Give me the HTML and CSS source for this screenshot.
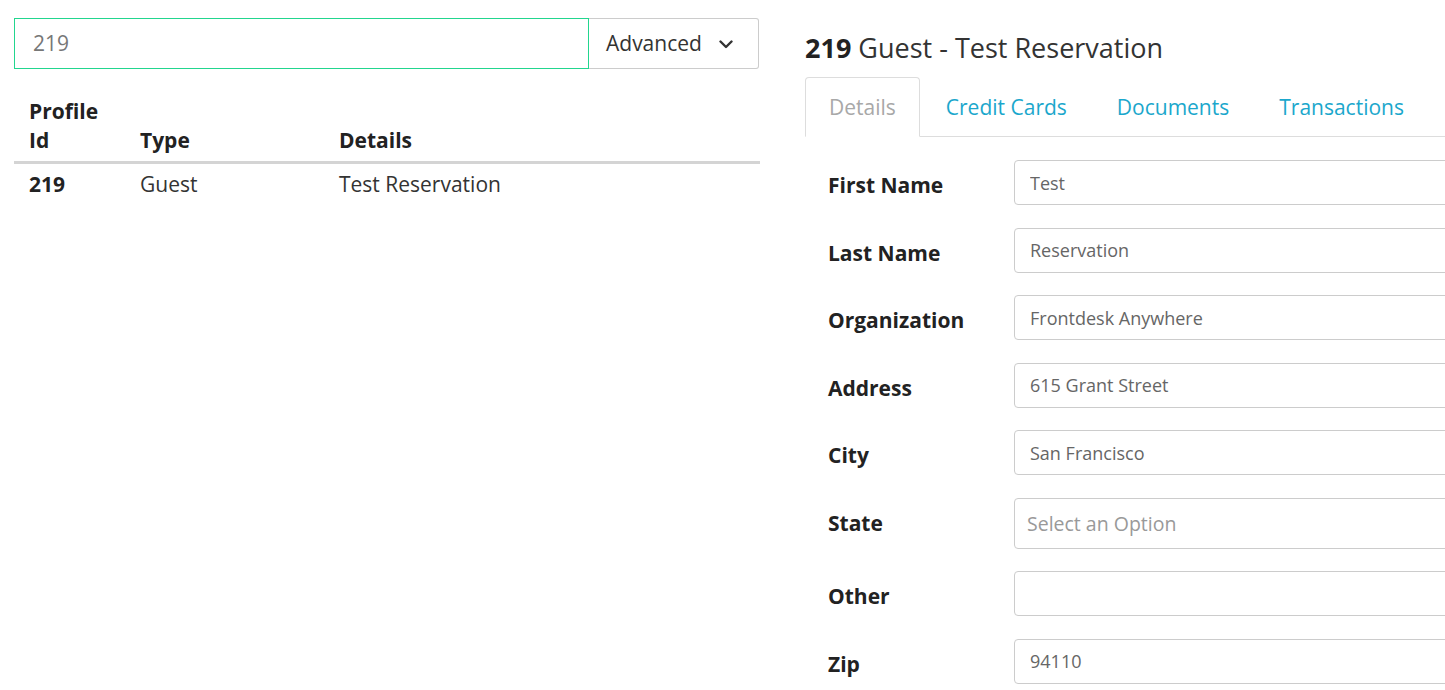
FILE: index.html
```html
<!DOCTYPE html>
<html>
<head>
<meta charset="utf-8">
<link rel="stylesheet" href="styles.css">
</head>
<body>
<div class="page">
  <div class="left">
    <div class="search">
      <input class="search-input" type="text" value="219">
      <button class="adv-btn">Advanced
        <svg class="chev" width="14" height="9" viewBox="0 0 14 9"><path d="M1.5 1.5l5.5 5.5 5.5-5.5" fill="none" stroke="#333" stroke-width="2.4" stroke-linecap="round" stroke-linejoin="round"/></svg>
      </button>
    </div>
    <table class="results">
      <colgroup><col class="c1"><col class="c2"><col class="c3"></colgroup>
      <thead>
        <tr><th>Profile Id</th><th>Type</th><th>Details</th></tr>
      </thead>
      <tbody>
        <tr><td class="bold">219</td><td>Guest</td><td>Test Reservation</td></tr>
      </tbody>
    </table>
  </div>
  <div class="right">
    <h2 class="title"><strong>219</strong> Guest - Test Reservation</h2>
    <ul class="tabs">
      <li class="tab active"><a>Details</a></li>
      <li class="tab"><a>Credit Cards</a></li>
      <li class="tab"><a>Documents</a></li>
      <li class="tab"><a>Transactions</a></li>
    </ul>
    <div class="form">
      <div class="row"><label>First Name</label><input class="field" type="text" value="Test"></div>
      <div class="row"><label>Last Name</label><input class="field" type="text" value="Reservation"></div>
      <div class="row"><label>Organization</label><input class="field" type="text" value="Frontdesk Anywhere"></div>
      <div class="row"><label>Address</label><input class="field" type="text" value="615 Grant Street"></div>
      <div class="row"><label>City</label><input class="field" type="text" value="San Francisco"></div>
      <div class="row"><label>State</label><div class="select">Select an Option</div></div>
      <div class="row"><label>Other</label><input class="field" type="text" value=""></div>
      <div class="row"><label>Zip</label><input class="field" type="text" value="94110"></div>
    </div>
  </div>
</div>
</body>
</html>
```

FILE: styles.css
```css
html, body {
  margin: 0;
  padding: 0;
  background: #fff;
  overflow: hidden;
  width: 1445px;
  height: 690px;
}
body {
  font-family: "Open Sans", "Liberation Sans", sans-serif;
  color: #333;
}
.page {
  display: flex;
  gap: 45px;
  padding: 18px 0 0 14px;
}
.left {
  width: 746px;
  flex: none;
}
.search {
  display: flex;
  height: 51px;
  width: 745px;
}
.search-input {
  box-sizing: border-box;
  width: 575px;
  height: 51px;
  border: 1px solid #22d68f;
  margin: 0;
  padding: 0 18px 2px;
  font-family: inherit;
  font-size: 21px;
  color: #777;
  outline: none;
  background: #fff;
}
.adv-btn {
  box-sizing: border-box;
  flex: 1;
  height: 51px;
  margin: 0;
  border: 1px solid #ccc;
  border-left: none;
  border-radius: 0 3px 3px 0;
  background: #fff;
  font-family: inherit;
  font-size: 21px;
  color: #333;
  display: flex;
  align-items: center;
  padding: 0 0 2px 17px;
  gap: 17px;
}
.chev {
  display: block;
  margin-top: 3px;
}
.results {
  margin-top: 20px;
  width: 746px;
  border-collapse: collapse;
  table-layout: fixed;
  font-size: 21px;
  line-height: 29px;
}
.c1 { width: 111px; }
.c2 { width: 199px; }
.results th {
  text-align: left;
  font-weight: 700;
  vertical-align: bottom;
  padding: 8px 15px 6px;
  border-bottom: 3px solid #d4d4d4;
  color: #222;
}
.results td {
  padding: 6px 15px 7px;
  color: #333;
}
.results td.bold {
  font-weight: 700;
  color: #222;
}
.right {
  width: 720px;
  flex: none;
}
.title {
  margin: 12px 0 11px;
  font-size: 27px;
  line-height: 36px;
  font-weight: 400;
  color: #333;
}
.title strong {
  font-weight: 700;
  color: #222;
}
.tabs {
  list-style: none;
  margin: 0;
  padding: 0;
  display: flex;
  border-bottom: 1px solid #ddd;
}
.tab {
  margin: 0 2px -1px 0;
}
.tab a {
  display: block;
  padding: 15px 23px;
  font-size: 21px;
  line-height: 28px;
  color: #1ba7cc;
  border: 1px solid transparent;
  border-radius: 4px 4px 0 0;
}
.tab.active a {
  color: #a8a8a8;
  background: #fff;
  border-color: #ddd #ddd transparent;
}
.form {
  padding: 23px 0 0 23px;
  display: flex;
  flex-direction: column;
  gap: 22.5px;
}
.row {
  display: grid;
  grid-template-columns: 186px 1fr;
  align-items: start;
}
.row label {
  padding-top: 11px;
  font-size: 21px;
  line-height: 28px;
  font-weight: 700;
  color: #222;
}
.field {
  box-sizing: border-box;
  width: 100%;
  height: 45px;
  margin: 0;
  border: 1px solid #ccc;
  border-radius: 4px;
  padding: 0 15px;
  font-family: inherit;
  font-size: 18px;
  color: #666;
  background: #fff;
  outline: none;
}
.select {
  box-sizing: border-box;
  height: 51px;
  border: 1px solid #ccc;
  border-radius: 4px;
  padding: 0 12px;
  display: flex;
  align-items: center;
  font-size: 19.5px;
  color: #999;
}
```
